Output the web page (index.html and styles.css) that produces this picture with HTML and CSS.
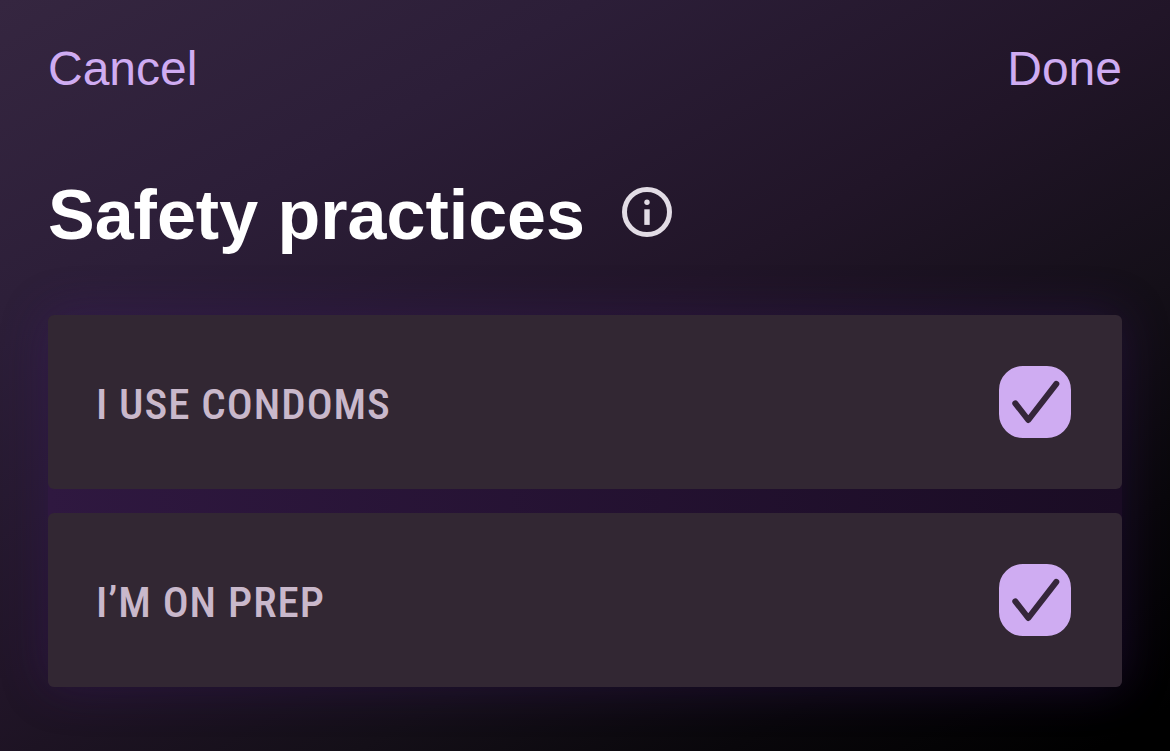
FILE: index.html
```html
<!DOCTYPE html>
<html lang="en">
<head>
<meta charset="utf-8">
<meta name="viewport" content="width=device-width, initial-scale=1">
<title>Safety practices</title>
<link rel="stylesheet" href="styles.css">
</head>
<body>
<form class="sheet">
  <header class="toolbar">
    <button type="button" class="text-button">Cancel</button>
    <button type="submit" class="text-button">Done</button>
  </header>
  <div class="heading">
    <h1 class="title">Safety practices</h1>
    <button type="button" class="info-button" aria-label="About safety practices">
      <svg class="info-icon" viewBox="0 0 50 50" aria-hidden="true">
        <circle cx="25" cy="25" r="22.5" fill="none" stroke="currentColor" stroke-width="5"/>
        <circle cx="25" cy="15.2" r="2.7" fill="currentColor"/>
        <rect x="22.3" y="22.3" width="5.4" height="15.6" fill="currentColor"/>
      </svg>
    </button>
  </div>
  <div class="options">
    <label class="option">
      <span class="option-label">I USE CONDOMS</span>
      <span class="check">
        <input class="check-input" type="checkbox" checked>
        <svg class="check-mark" viewBox="0 0 72 72" aria-hidden="true"><path d="M16.3 37.3 29.3 54 57.3 17.8"/></svg>
      </span>
    </label>
    <label class="option">
      <span class="option-label">I’M ON PREP</span>
      <span class="check">
        <input class="check-input" type="checkbox" checked>
        <svg class="check-mark" viewBox="0 0 72 72" aria-hidden="true"><path d="M16.3 37.3 29.3 54 57.3 17.8"/></svg>
      </span>
    </label>
  </div>
</form>
</body>
</html>
```
FILE: styles.css
```css
* {
  box-sizing: border-box;
}

body {
  margin: 0;
  min-height: 100vh;
  background: linear-gradient(150deg, #352640 0%, #2c1e38 24%, #211528 48%, #140f18 67%, #09070b 82%, #000 97%);
  color: #fff;
  font-family: "Liberation Sans", Arial, sans-serif;
}

.sheet {
  display: flex;
  flex-direction: column;
  padding: 41px 48px 64px;
}

.toolbar {
  display: flex;
  justify-content: space-between;
}

.text-button,
.info-button {
  margin: 0;
  padding: 0;
  border: 0;
  background: none;
  font: inherit;
  cursor: pointer;
}

.text-button {
  color: #cfacf2;
  font-size: 48px;
  line-height: 56px;
}

.heading {
  display: flex;
  align-items: center;
  gap: 37px;
  margin-top: 68px;
}

.title {
  margin: 0;
  padding-top: 6px;
  font-size: 70px;
  font-weight: 700;
  line-height: 88px;
}

.info-button {
  color: #e2dce5;
}

.info-icon {
  display: block;
  width: 50px;
  height: 50px;
}

.options {
  display: grid;
  gap: 24px;
  margin-top: 56px;
  border-radius: 6px;
  background: linear-gradient(90deg, #2f1840, #1a0c24);
  box-shadow: 0 0 48px rgba(68, 24, 120, 0.32);
}

.option {
  display: flex;
  align-items: center;
  justify-content: space-between;
  padding: 51px 51px 51px 48px;
  border-radius: 6px;
  background: #322733;
  cursor: pointer;
}

.option-label {
  padding-top: 4px;
  color: #c9b8cb;
  font-family: "Roboto Condensed", Roboto, sans-serif;
  font-size: 43px;
  font-weight: 500;
  line-height: 48px;
  letter-spacing: 1px;
}

.check {
  display: grid;
}

.check-input,
.check-mark {
  grid-area: 1 / 1;
  width: 72px;
  height: 72px;
}

.check-input {
  margin: 0;
  border: 3px solid #cfacf2;
  border-radius: 24px;
  appearance: none;
}

.check-input:checked {
  background: #cfacf2;
}

.check-mark {
  fill: none;
  stroke: #35263a;
  stroke-width: 6;
  stroke-linecap: round;
  stroke-linejoin: round;
  visibility: hidden;
  pointer-events: none;
}

.check-input:checked + .check-mark {
  visibility: visible;
}
```
